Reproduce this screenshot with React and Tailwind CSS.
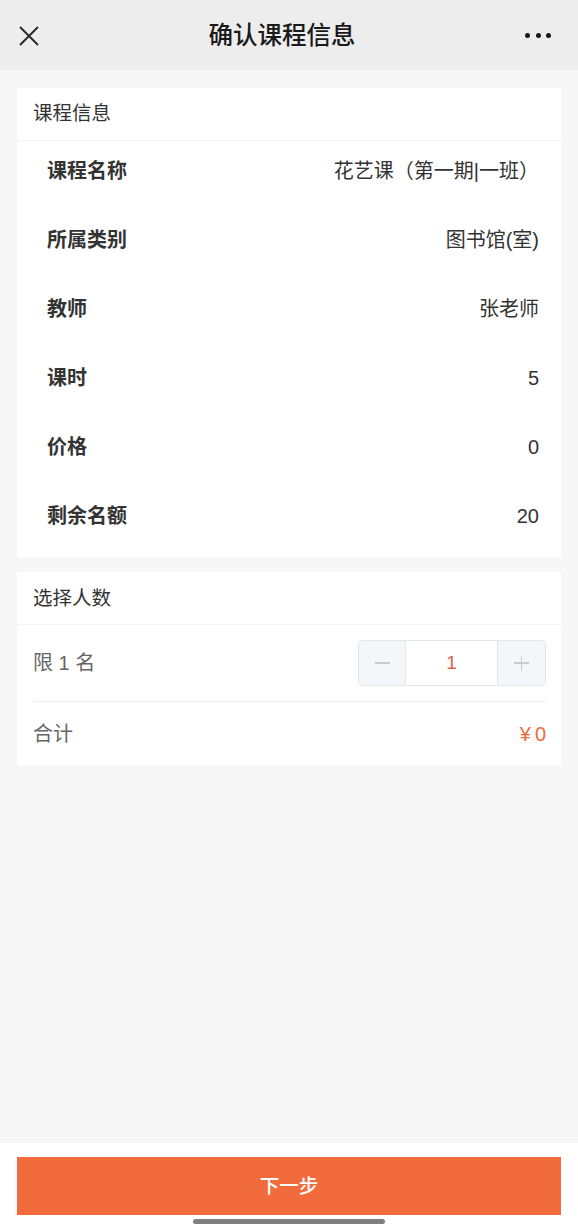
import React from "react";

const font = { fontFamily: '"Liberation Sans", "Noto Sans CJK SC", "Noto Sans", sans-serif' };

const rows = [
  ["课程名称", "花艺课（第一期|一班）"],
  ["所属类别", "图书馆(室)"],
  ["教师", "张老师"],
  ["课时", "5"],
  ["价格", "0"],
  ["剩余名额", "20"],
];

export default function App() {
  return (
    <div
      className="flex h-[1228px] w-[578px] flex-col bg-[#f7f7f7] text-[#333]"
      style={font}
    >
      {/* Header */}
      <div className="flex h-[70px] shrink-0 items-center justify-between bg-[#ededed] pl-[19px] pr-[27px]">
        <svg width="20" height="20" viewBox="0 0 20 20" className="mt-[1px]">
          <path d="M1 1 L19 19 M19 1 L1 19" stroke="#2b2b2b" strokeWidth="2" strokeLinecap="butt" />
        </svg>
        <div className="mt-[2px] text-[24.5px] font-medium leading-none text-[#1a1a1a]">确认课程信息</div>
        <div className="flex items-center gap-[5.5px]">
          <span className="h-[5px] w-[5px] rounded-full bg-[#1a1a1a]" />
          <span className="h-[5px] w-[5px] rounded-full bg-[#1a1a1a]" />
          <span className="h-[5px] w-[5px] rounded-full bg-[#1a1a1a]" />
        </div>
      </div>

      {/* Body */}
      <div className="flex flex-1 flex-col gap-[15px] px-[17px] pt-[18px]">
        {/* Card 1 */}
        <div className="bg-white">
          <div className="flex h-[53px] items-center border-b border-[#f4f4f4] pl-[16px] text-[19.5px] text-[#333]">
            课程信息
          </div>
          <div className="pb-[1px]">
            {rows.map(([k, v]) => (
              <div
                key={k}
                className="flex h-[69.2px] items-start justify-between pl-[30px] pr-[22px] pt-[12.5px] text-[20px] leading-[35px]"
              >
                <span className="font-bold text-[#333]">{k}</span>
                <span className="text-[#333]">{v}</span>
              </div>
            ))}
          </div>
        </div>

        {/* Card 2 */}
        <div className="bg-white">
          <div className="flex h-[53px] items-center border-b border-[#f4f4f4] pl-[16px] text-[19.5px] text-[#333]">
            选择人数
          </div>
          <div className="flex h-[76px] items-center justify-between pl-[16px] pr-[15px]">
            <span className="text-[20px] text-[#666]">限 1 名</span>
            <div className="flex h-[46px] w-[188px] overflow-hidden rounded-[4px] border border-[#e3e5ea]">
              <div className="flex w-[46px] items-center justify-center bg-[#f5f6f9]">
                <span className="h-[1.5px] w-[15px] bg-[#c9cbd0]" />
              </div>
              <div className="flex flex-1 items-center justify-center border-x border-[#e3e5ea] bg-white text-[19px] text-[#dc6448]">
                1
              </div>
              <div className="relative flex w-[47px] items-center justify-center bg-[#f5f6f9]">
                <span className="h-[1.5px] w-[15px] bg-[#c9cbd0]" />
                <span className="absolute h-[15px] w-[1.5px] bg-[#c9cbd0]" />
              </div>
            </div>
          </div>
          <div className="ml-[16px] mr-[15px] h-px bg-[#f1f1f1]" />
          <div className="flex h-[63px] items-center justify-between pl-[16px] pr-[15px]">
            <span className="text-[20px] text-[#666]">合计</span>
            <span className="flex text-[20px] text-[#ea6c3e]">
              <span>¥</span>
              <span className="ml-[4px]">0</span>
            </span>
          </div>
        </div>
      </div>

      {/* Bottom bar */}
      <div className="flex h-[85px] shrink-0 flex-col items-center bg-white px-[17px] pt-[14px]">
        <div className="flex h-[58px] w-full items-center justify-center bg-[#f26b3d] pt-[1px] text-[19.5px] font-medium text-white">
          下一步
        </div>
        <div className="mt-[4px] h-[5px] w-[192px] rounded-full bg-[#7f7f7f]" />
      </div>
    </div>
  );
}
